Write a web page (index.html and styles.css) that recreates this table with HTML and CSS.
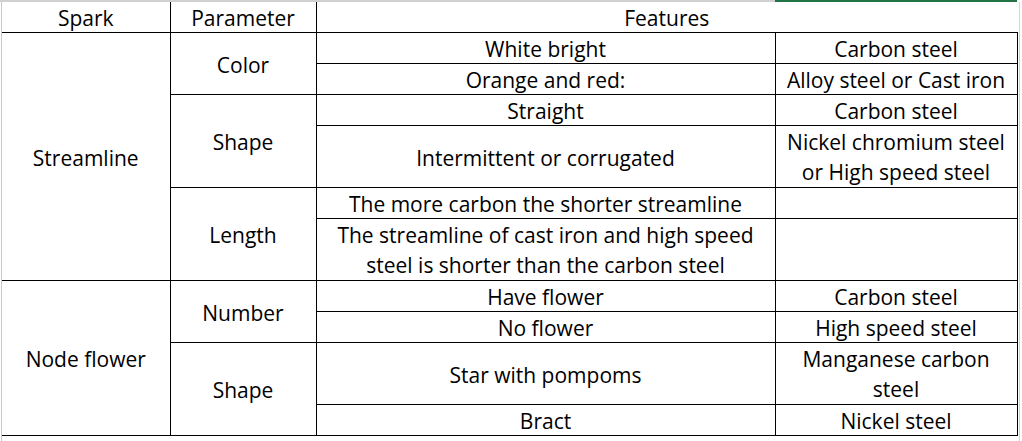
FILE: index.html
```html
<!DOCTYPE html>
<html>
<head>
<meta charset="utf-8">
<link rel="stylesheet" href="styles.css">
</head>
<body>
<div class="topstrip"><div class="grid-top"></div><div class="sel-top"></div></div>
<div class="sheet">
<table class="spark">
<colgroup><col class="c1"><col class="c2"><col class="c3"><col class="c4"></colgroup>
<tr class="head"><td class="h1">Spark</td><td class="h2">Parameter</td><td class="h3" colspan="2">Features</td></tr>
<tr class="r1"><td rowspan="6" class="first">Streamline</td><td rowspan="2">Color</td><td>White bright</td><td class="last">Carbon steel</td></tr>
<tr class="r1"><td>Orange and red:</td><td class="last">Alloy steel or Cast iron</td></tr>
<tr class="r1"><td rowspan="2">Shape</td><td>Straight</td><td class="last">Carbon steel</td></tr>
<tr class="r2"><td>Intermittent or corrugated</td><td class="last two">Nickel chromium steel<br>or High speed steel</td></tr>
<tr class="r1"><td rowspan="2">Length</td><td>The more carbon the shorter streamline</td><td class="last"></td></tr>
<tr class="r2"><td class="two">The streamline of cast iron and high speed<br>steel is shorter than the carbon steel</td><td class="last"></td></tr>
<tr class="r1"><td rowspan="4" class="first">Node flower</td><td rowspan="2">Number</td><td>Have flower</td><td class="last">Carbon steel</td></tr>
<tr class="r1"><td>No flower</td><td class="last">High speed steel</td></tr>
<tr class="r2"><td rowspan="2">Shape</td><td>Star with pompoms</td><td class="last two">Manganese carbon<br>steel</td></tr>
<tr class="r1"><td>Bract</td><td class="last">Nickel steel</td></tr>
</table>
<div class="bottomgrid"></div>
</div>
</body>
</html>
```
FILE: styles.css
```css
html, body {
  margin: 0;
  padding: 0;
  background: #ffffff;
}
body {
  width: 1022px;
  height: 441px;
  overflow: hidden;
  font-family: "Open Sans", "Liberation Sans", sans-serif;
  color: #000000;
}
.topstrip {
  display: flex;
  height: 2px;
}
.grid-top {
  width: 775px;
  background: #d0d0d0;
}
.sel-top {
  width: 242px;
  background: #217346;
}
.sheet {
  margin-left: 1px;
  border-left: 1px solid #c8c8c8;
  width: 1017px;
  border-right: 1px solid #d4d4d4;
}
.spark {
  border-collapse: collapse;
  table-layout: fixed;
  width: 1015px;
  font-size: 21px;
}
.c1 { width: 168px; }
.c2 { width: 146px; }
.c3 { width: 459px; }
.c4 { width: 242px; }
.spark td {
  border: 1px solid #000000;
  padding: 3px 0 0 0;
  text-align: center;
  vertical-align: middle;
  line-height: 27px;
  white-space: nowrap;
}
.spark td.two {
  padding-top: 2px;
  line-height: 29.5px;
}
.spark td.first { border-left: none; }
.spark .head td {
  border-top: none;
  height: 27px;
}
.spark .head td.h1 { border-left: none; }
.spark .head td.h3 { border-right: none; }
.spark tr.r1 td { height: 27px; }
.spark tr.r2 td { height: 58px; }
.spark tr.r2 td.two { height: 59px; }
.bottomgrid {
  height: 5px;
}
```
